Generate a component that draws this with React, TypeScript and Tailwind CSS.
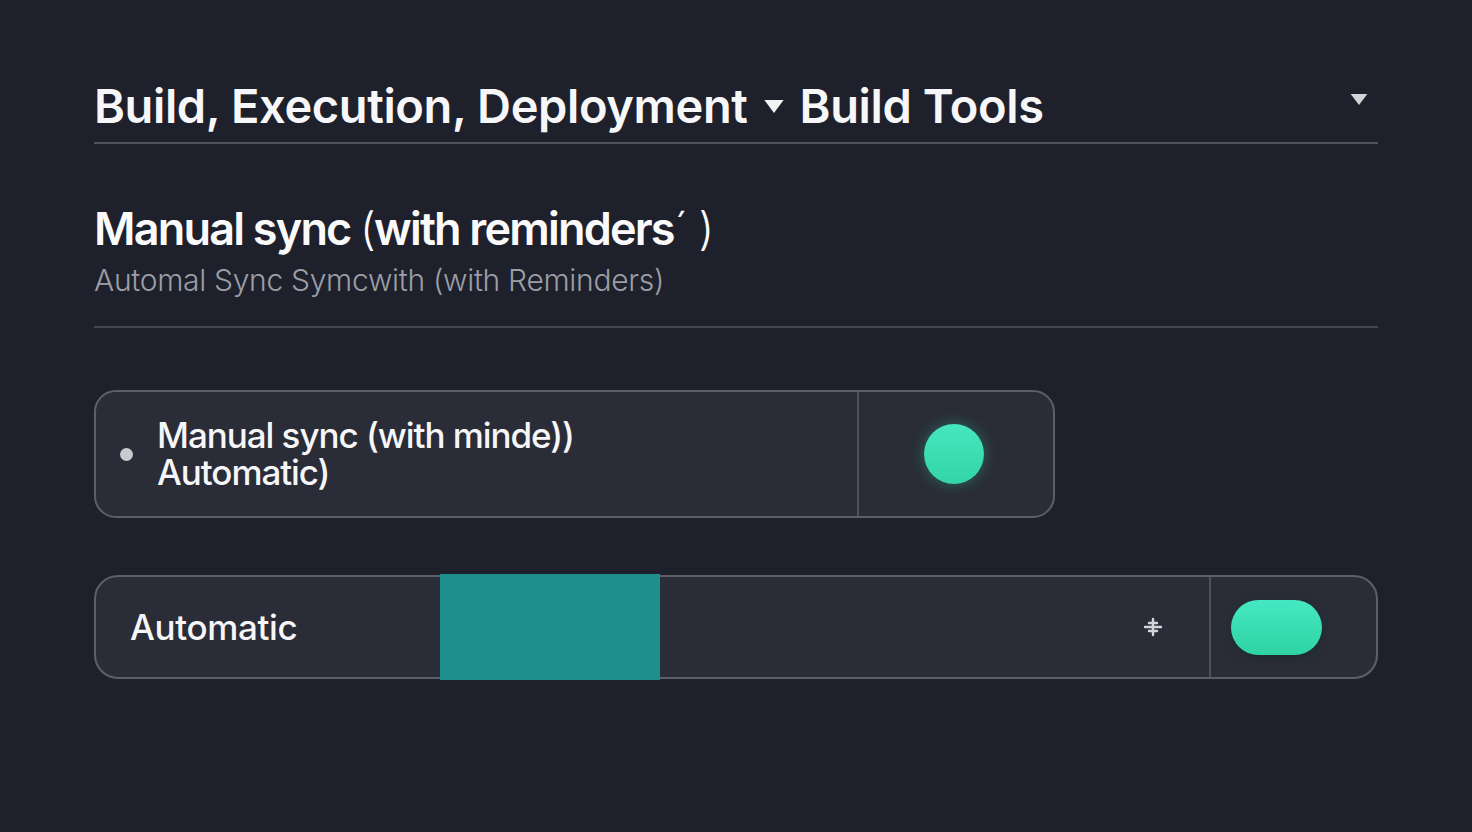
import React from "react";

const font = { fontFamily: "Inter, 'Noto Sans', 'Liberation Sans', sans-serif" };

function Caret({ className }: { className?: string }) {
  return (
    <svg viewBox="0 0 20 14" className={className} aria-hidden>
      <path d="M1 1 H19 L10 13 Z" fill="currentColor" />
    </svg>
  );
}

function Sparkle() {
  return (
    <svg width="24" height="24" viewBox="0 0 24 24" aria-hidden>
      <g stroke="#d4d5da" strokeWidth="2.4" strokeLinecap="round">
        <path d="M12 4 V20" />
        <path d="M4 12 H20" />
        <path d="M8 8 H16" />
        <path d="M8 16 H16" />
      </g>
    </svg>
  );
}

export default function App() {
  return (
    <div className="min-h-screen w-full bg-[#1e212b] text-white" style={font}>
      <div className="pl-[94px] pr-[94px] pt-[78px]">
        {/* breadcrumb */}
        <div className="flex items-center justify-between border-b-2 border-[#50535c] pb-[8px]">
          <div className="flex items-center gap-[15px] text-[47px] font-semibold leading-[56px] tracking-[-0.008em] text-[#f7f7f9]">
            <span>Build, Execution, Deployment</span>
            <Caret className="h-[15px] w-[22px] text-[#f2f2f4]" />
            <span>Build Tools</span>
          </div>
          <Caret className="mr-[9px] -mt-[14px] h-[13px] w-[20px] text-[#d3d4d8]" />
        </div>

        {/* section heading */}
        <div className="border-b-2 border-[#44474f] pt-[59px] pb-[26px]">
          <h1 className="text-[45px] font-semibold leading-[52px] tracking-[-0.04em] text-[#fafafb]">
            Manual sync <span className="font-light">(</span>with reminders<span className="font-light">ˊ )</span>
          </h1>
          <p className="mt-[5px] text-[30px] font-light leading-[40px] tracking-[-0.01em] text-[#9c9ea6]">
            Automal Sync Symcwith (with Reminders)
          </p>
        </div>

        {/* first option */}
        <div className="mt-[62px] flex h-[128px] w-[961px] overflow-hidden rounded-[22px] border-2 border-[#5c5f68] bg-[#2a2d37]">
          <div className="flex flex-1 items-center border-r-2 border-[#4e515a] pl-[24px]">
            <span className="h-[13px] w-[13px] rounded-full bg-[#c9c9ce]" />
            <p className="ml-[24px] text-[35px] font-medium leading-[37px] tracking-[-0.03em] text-[#f6f6f8]">
              Manual sync (with minde))
              <br />
              Automatic)
            </p>
          </div>
          <div className="flex w-[194px] items-center justify-center pr-[4px]">
            <span className="h-[60px] w-[60px] rounded-full bg-gradient-to-b from-[#45e6c0] to-[#33d4a6] shadow-[0_0_14px_rgba(51,212,166,0.35)]" />
          </div>
        </div>

        {/* second option */}
        <div className="relative mt-[57px] flex h-[104px] items-stretch rounded-[24px] border-2 border-[#5c5f68] bg-[#2a2d37]">
          <div className="flex w-[344px] items-center pl-[34px] text-[35px] font-medium tracking-[-0.01em] text-[#f6f6f8]">
            Automatic
          </div>
          <div className="-my-[3px] w-[220px] bg-[#1e8f8b]" />
          <div className="flex flex-1 items-center justify-end border-r-2 border-[#4e515a] pr-[44px]">
            <Sparkle />
          </div>
          <div className="flex w-[165px] items-center pl-[20px]">
            <span className="h-[55px] w-[91px] rounded-full bg-gradient-to-b from-[#45e8c2] to-[#2fd3a3] shadow-[0_2px_10px_rgba(20,40,40,0.6)]" />
          </div>
        </div>
      </div>
    </div>
  );
}
